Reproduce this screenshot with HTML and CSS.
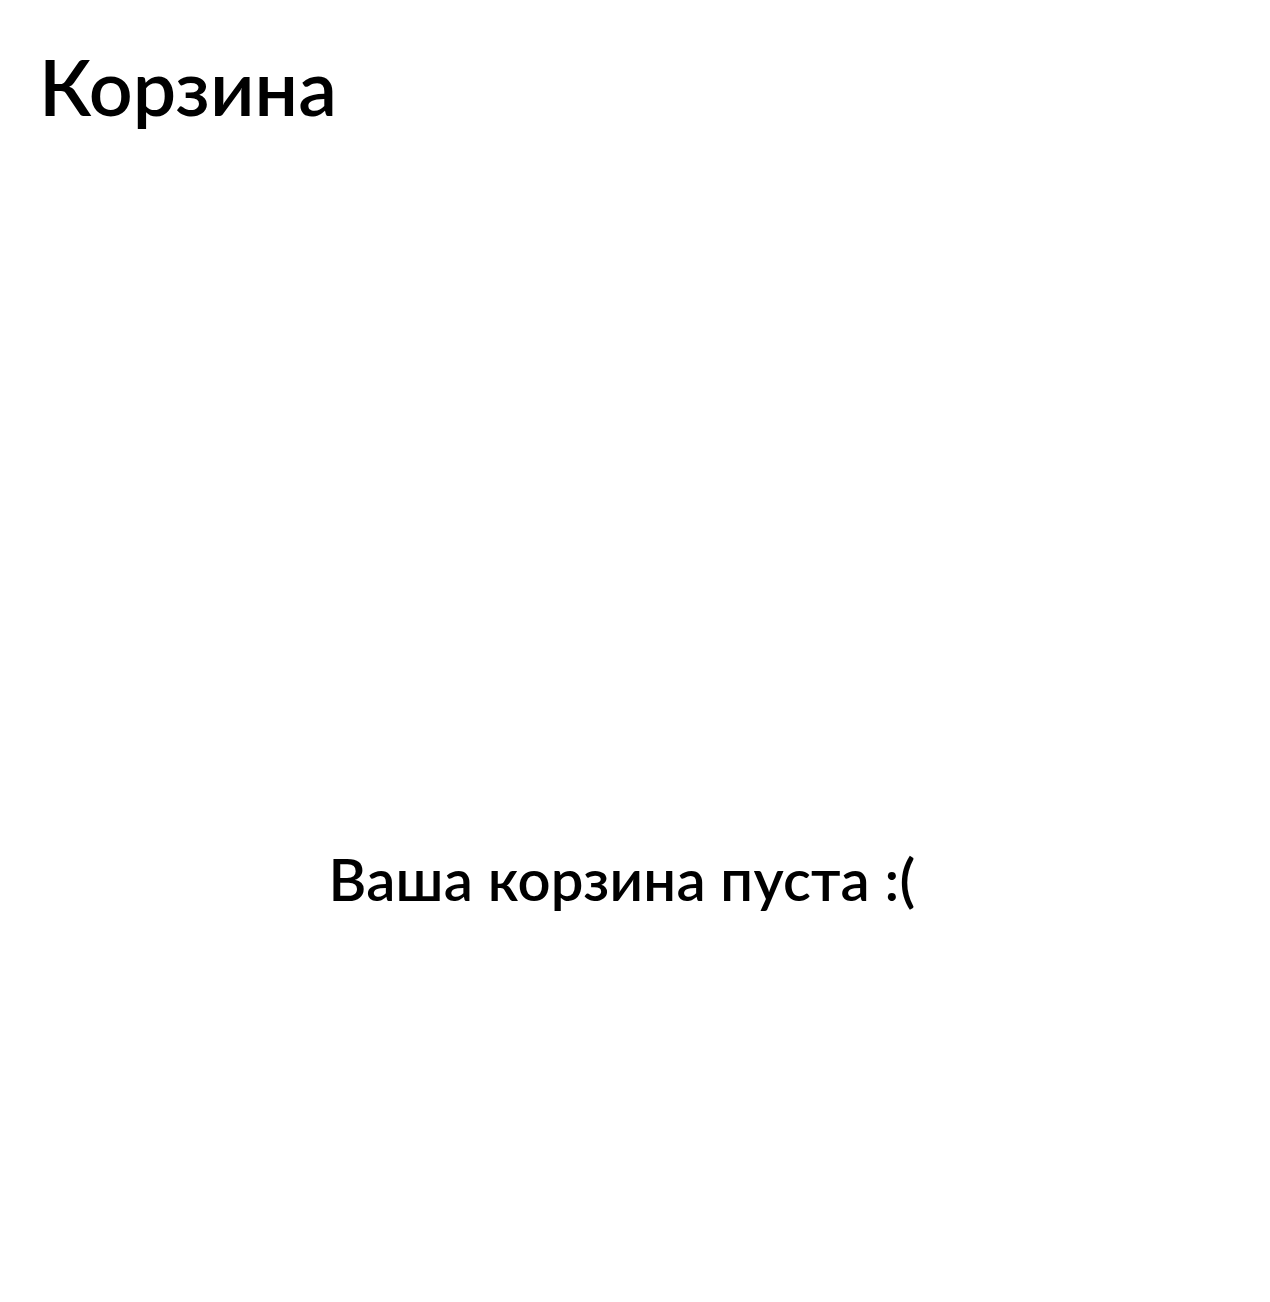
FILE: index.html
```html
<!DOCTYPE html>
<html lang="ru">
<head>
<meta charset="utf-8">
<title>Корзина</title>
<link rel="stylesheet" href="styles.css">
</head>
<body>
<div class="page">
  <h1 class="title">Корзина</h1>
  <main class="cart">
    <p class="empty">Ваша корзина пуста :(</p>
  </main>
</div>
</body>
</html>
```
FILE: styles.css
```css
html, body {
  margin: 0;
  padding: 0;
  background: #ffffff;
}
.page {
  font-family: "Lato", "Open Sans", sans-serif;
  color: #000000;
  min-height: 1302px;
  display: flex;
  flex-direction: column;
}
.title {
  margin: 0;
  padding: 40px 0 0 39px;
  font-size: 77px;
  font-weight: 600;
  line-height: 1.2;
}
.cart {
  display: flex;
  justify-content: center;
  padding-top: 712px;
  padding-right: 26px;
}
.empty {
  margin: 0;
  font-size: 58px;
  font-weight: 600;
  line-height: 1.2;
  letter-spacing: 0.2px;
}
```
